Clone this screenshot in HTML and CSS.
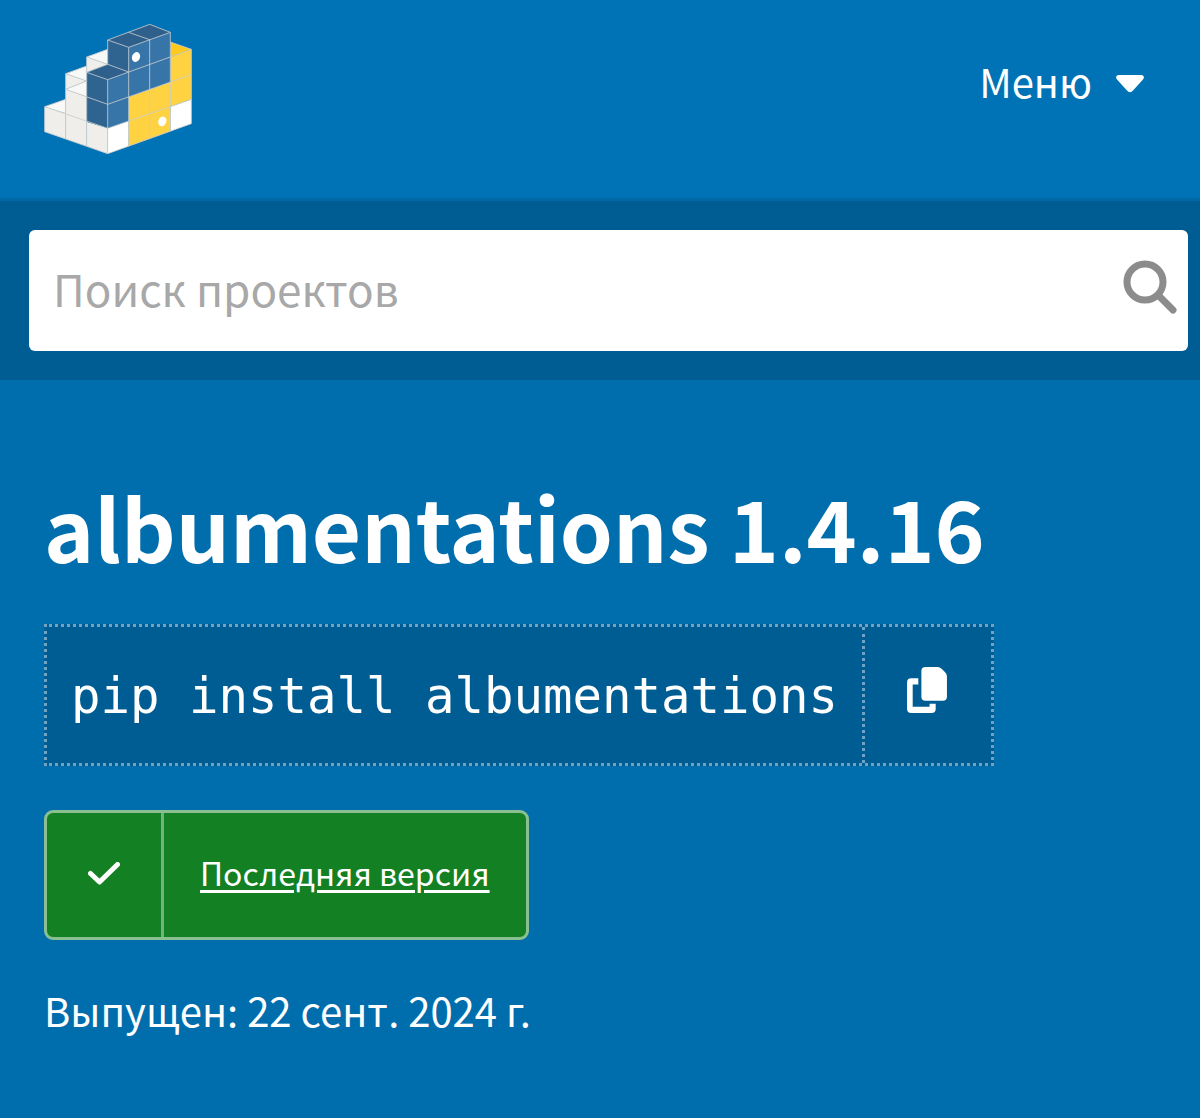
FILE: index.html
```html
<!DOCTYPE html>
<html lang="ru">

<head>
    <meta charset="UTF-8">
    <meta name="viewport" content="width=device-width, initial-scale=1.0">
    <title>albumentations · PyPI</title>
    <link rel="stylesheet" href="styles.css">
</head>

<body>
    <header class="site-header">
        <a class="logo" href="#" aria-label="PyPI">
            <svg viewBox="42 42 442 390" width="148" height="130">
                <!-- white steps -->
                <g fill="#efeeea">
                    <path d="M43 290L106 310V387L43 365Z"/>
                    <path d="M106 238L169 260V409L106 387Z"/>
                    <path d="M169 335L232 355V431L169 409Z"/>
                    <path d="M106 191L169 213L106 238Z"/>
                    <path d="M169 141L232 163L169 187Z"/>
                </g>
                <g fill="#f8f8f6">
                    <path d="M43 290L106 268V310Z"/>
                    <path d="M106 191L169 168V213Z"/>
                    <path d="M106 238L169 213V260Z"/>
                    <path d="M169 141L232 118V163Z"/>
                </g>
                <path fill="#fff" d="M232 355L295 333V409L232 431ZM420 290L483 268V341L420 364Z"/>
                <!-- yellow -->
                <path fill="#ffd242" d="M295 261L420 216V142L483 118V268L420 290V364L295 409Z"/>
                <path fill="#ffc91d" d="M420 96L483 118L420 142Z"/>
                <!-- blue -->
                <path fill="#2f6491" d="M169 187L232 209V355L169 335ZM232 90L295 112V186L232 163Z"/>
                <path fill="#3775a9" d="M232 209L295 186V112L420 67V216L232 283ZM232 283L295 261V333L232 355Z"/>
                <path fill="#2f608c" d="M169 187L232 163L295 186L232 209ZM232 90L358 43L420 67L295 112Z"/>
                <g fill="none" stroke="#c9cccd" stroke-width="2.5" stroke-linejoin="round">
                    <path d="M43 365L232 431L483 341V118L420 96"/>
                    <path d="M43 365V290L232 355L483 268M43 290L106 268"/>
                    <path d="M106 387V191L169 168M106 191L169 213L106 238L232 283L483 194"/>
                    <path d="M169 409V141L232 118M169 141L232 163M169 187L232 209L483 118"/>
                    <path d="M232 431V209M169 187L232 163L295 186V409"/>
                    <path d="M232 163V90L358 43L420 67V364M232 90L295 112L420 67M295 186V112"/>
                    <path d="M295 67L358 89V387"/>
                </g>
                <ellipse cx="317" cy="141" rx="12" ry="15" transform="rotate(22 317 141)" fill="#fff"/>
                <ellipse cx="396" cy="334" rx="12" ry="15" transform="rotate(22 396 334)" fill="#fff"/>
            </svg>
        </a>
        <button class="menu" type="button">
            <span>Меню</span>
            <svg viewBox="0 0 28 18" width="28" height="18">
                <path fill="#fff" d="M2.500 0H25.500Q29.500 1 27 4.500L17 15.500Q14 19 11 15.500L1 4.500Q-1.500 1 2.500 0Z"/>
            </svg>
        </button>
    </header>

    <form class="search">
        <div class="search-box">
            <input type="search" placeholder="Поиск проектов" aria-label="Поиск проектов">
            <button type="submit" aria-label="Поиск">
                <svg viewBox="0 0 54 54" width="54" height="54" fill="none" stroke="#8c8c8c">
                    <circle cx="22" cy="22" r="18" stroke-width="7"/>
                    <path d="M36 36L50 50" stroke-width="7" stroke-linecap="round"/>
                </svg>
            </button>
        </div>
    </form>

    <main class="package">
        <h1>albumentations 1.4.16</h1>
        <div class="pip">
            <code>pip install albumentations</code>
            <button type="button" aria-label="Скопировать">
                <svg viewBox="0 0 39 45" width="40" height="46">
                    <path fill="#fff" d="M18 0H30Q32 0 34 2L37 5Q39 7 39 9V29Q39 33 35 33H18Q14 33 14 29V4Q14 0 18 0Z"/>
                    <path fill="#fff" d="M4 11H11V17H5.500V39H22V36H28V41Q28 45 24 45H4Q0 45 0 41V15Q0 11 4 11Z"/>
                </svg>
            </button>
        </div>
        <div class="status">
            <span class="status-icon">
                <svg viewBox="0 0 32 23" width="32" height="23" fill="none" stroke="#fff" stroke-width="5" stroke-linecap="round" stroke-linejoin="round">
                    <path d="M2.500 11.500L11.500 20L29.500 2.500"/>
                </svg>
            </span>
            <a href="#">Последняя версия</a>
        </div>
        <p class="date">Выпущен: <time datetime="2024-09-22">22 сент. 2024 г.</time></p>
    </main>
</body>

</html>
```

FILE: styles.css
```css
* {
    margin: 0;
    padding: 0;
    box-sizing: border-box;
}

body {
    background: #006dad;
    color: #fff;
    font-family: "Noto Sans CJK SC", "Noto Sans", sans-serif;
}

svg {
    display: block;
}

button {
    border: 0;
    background: none;
    color: inherit;
    font: inherit;
    cursor: pointer;
}

.site-header {
    display: flex;
    justify-content: space-between;
    align-items: flex-start;
    padding: 24px 56px 44px 44px;
    background: #0073b7;
    border-bottom: 3px solid #0068a5;
}

.menu {
    display: flex;
    align-items: center;
    gap: 24px;
    height: 120px;
    font-size: 40px;
}

.menu span {
    padding-bottom: 6px;
}

.search {
    padding: 29px 12px 29px 29px;
    background: #005d93;
}

.search-box {
    display: flex;
    align-items: center;
    height: 121px;
    padding: 0 11px 0 24px;
    background: #fff;
    border-radius: 6px;
}

.search-box input {
    flex: 1;
    min-width: 0;
    padding-bottom: 6px;
    border: 0;
    outline: 0;
    background: none;
    color: #333;
    font: inherit;
    font-size: 44px;
}

.search-box input::placeholder {
    color: #a8a8a8;
}

.search-box button {
    padding-bottom: 8px;
}

.package {
    padding: 94px 44px;
}

h1 {
    font-size: 85px;
    line-height: 104px;
    font-weight: 600;
}

.pip {
    display: flex;
    width: fit-content;
    margin-top: 46px;
    border: 3px dotted #6fa3c1;
    background: #005d93;
}

.pip code {
    padding: 38px 24px 34px;
    font-family: "DejaVu Sans Mono", monospace;
    font-size: 49px;
    line-height: 64px;
}

.pip button {
    padding: 0 44px 10px 42px;
    border-left: 3px dotted #6fa3c1;
}

.status {
    display: flex;
    width: fit-content;
    height: 130px;
    margin-top: 44px;
    background: #148024;
    border: 3px solid #8ac091;
    border-radius: 9px;
}

.status-icon {
    display: flex;
    align-items: center;
    padding: 0 41px 4px;
    border-right: 3px solid #72b37c;
}

.status a {
    padding: 0 36px;
    color: #fff;
    font-size: 32px;
    line-height: 118px;
    text-underline-offset: 4px;
    text-decoration-thickness: 3px;
}

.date {
    margin-top: 40px;
    font-size: 40px;
    line-height: 60px;
}
```
